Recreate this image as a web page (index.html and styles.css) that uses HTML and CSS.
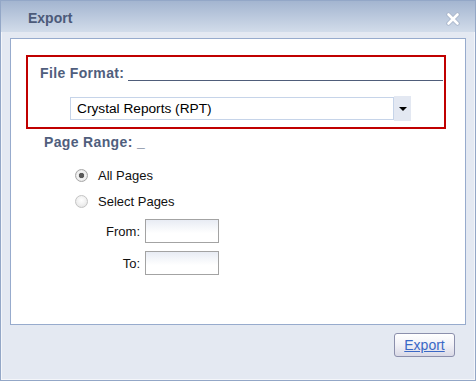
FILE: index.html
```html
<!DOCTYPE html>
<html>
<head>
<meta charset="utf-8">
<link rel="stylesheet" href="styles.css">
</head>
<body>
<div class="dialog">
  <div class="header">
    <span class="title">Export</span>
    <svg class="close" width="14" height="14" viewBox="0 0 14 14">
      <path d="M2.5 2.5 L11.5 11.5 M11.5 2.5 L2.5 11.5" stroke="#a9b6cb" stroke-width="4.4" stroke-linecap="round"/>
      <path d="M2.5 2.5 L11.5 11.5 M11.5 2.5 L2.5 11.5" stroke="#ffffff" stroke-width="2.6" stroke-linecap="round"/>
    </svg>
  </div>
  <div class="body">
    <div class="panel">
      <div class="format-box">
        <div class="legend">
          <span class="label">File Format:</span>
          <span class="rule"></span>
        </div>
        <div class="select-row">
          <div class="select-input">Crystal Reports (RPT)</div>
          <div class="select-btn"><span class="arrow"></span></div>
        </div>
      </div>
      <div class="range-label label">Page Range: _</div>
      <div class="radios">
        <div class="radio-row"><span class="radio checked"></span><span class="radio-text">All Pages</span></div>
        <div class="radio-row"><span class="radio"></span><span class="radio-text">Select Pages</span></div>
      </div>
      <div class="field-row first"><span class="field-label">From:</span><span class="field-input"></span></div>
      <div class="field-row"><span class="field-label">To:</span><span class="field-input"></span></div>
    </div>
    <div class="footer">
      <div class="btn"><span class="btn-text">Export</span></div>
    </div>
  </div>
</div>
</body>
</html>
```
FILE: styles.css
```css
html, body {
  margin: 0;
  padding: 0;
}
body {
  width: 476px;
  height: 381px;
  overflow: hidden;
  font-family: "Liberation Sans", Arial, sans-serif;
}
.dialog {
  width: 476px;
  height: 381px;
  box-sizing: border-box;
  border: 1px solid #93a7c7;
  box-shadow: inset 0 0 0 1px #f4f6fa;
  background: #e4e9f2;
  display: flex;
  flex-direction: column;
}
.header {
  height: 31px;
  flex: none;
  display: flex;
  align-items: center;
  justify-content: space-between;
  padding: 0 15px 0 27px;
  background: linear-gradient(#a3b5d0, #d2dcea);
  border-top: 0;
}
.title {
  font-weight: bold;
  font-size: 14px;
  color: #4c5a79;
  margin-top: 2px;
}
.close {
  display: block;
  margin-top: 5px;
}
.body {
  flex: 1;
  padding: 6px 9px 0 9px;
  display: flex;
  flex-direction: column;
}
.panel {
  height: 287px;
  box-sizing: border-box;
  border: 1px solid #97abcd;
  background: #ffffff;
}
.label {
  font-weight: bold;
  font-size: 14px;
  letter-spacing: 0.35px;
  color: #505e7d;
  line-height: 16px;
}
.format-box {
  margin: 16px 0 0 15px;
  width: 420px;
  height: 74px;
  box-sizing: border-box;
  border: 2px solid #c00000;
  padding-left: 12px;
}
.legend {
  display: flex;
  margin-top: 8px;
  height: 16px;
}
.rule {
  flex: 1;
  height: 0;
  margin: 15px 1px 0 4px;
  border-bottom: 1px solid #4f5d7a;
}
.select-row {
  display: flex;
  align-items: flex-start;
  margin: 15px 0 0 30px;
}
.select-input {
  width: 324px;
  height: 23px;
  box-sizing: border-box;
  margin-top: 1px;
  border: 1px solid #c6d4e9;
  padding-left: 6px;
  font-size: 13.7px;
  line-height: 21px;
  color: #000;
}
.select-btn {
  width: 17px;
  height: 25px;
  background: #e3e8f2;
  display: flex;
  align-items: center;
  justify-content: center;
}
.arrow {
  width: 0;
  height: 0;
  border-left: 4px solid transparent;
  border-right: 4px solid transparent;
  border-top: 4px solid #000;
  margin-top: 1px;
}
.range-label {
  margin: 5px 0 0 33px;
}
.radios {
  margin: 15px 0 0 64px;
  display: flex;
  flex-direction: column;
  gap: 6px;
}
.radio-row {
  display: flex;
  align-items: center;
  height: 20px;
}
.radio {
  width: 13px;
  height: 13px;
  box-sizing: border-box;
  border-radius: 50%;
  border: 1px solid #c4c4c4;
  background: radial-gradient(circle at 50% 40%, #ffffff 0%, #f1f1f1 50%, #dedede 100%);
  display: flex;
  align-items: center;
  justify-content: center;
}
.radio.checked {
  border-color: #a8a8a8;
  background: radial-gradient(circle at 50% 50%, #5a5a5a 0, #5a5a5a 2.4px, #e9e9e9 3px, #f4f4f4 4px, #cfcfcf 100%);
}
.radio-text {
  margin-left: 10px;
  font-size: 13px;
  color: #111;
}
.field-row {
  display: flex;
  align-items: center;
  margin: 8px 0 0 89px;
}
.field-row.first {
  margin-top: 8px;
}
.field-label {
  width: 40px;
  text-align: right;
  margin-right: 5px;
  font-size: 13px;
  color: #111;
}
.field-input {
  width: 74px;
  height: 24px;
  box-sizing: border-box;
  border: 1px solid #a3a3a3;
  background: linear-gradient(#e8ecf4, #ffffff 60%);
}
.footer {
  display: flex;
  justify-content: flex-end;
  padding: 8px 11px 0 0;
}
.btn {
  width: 61px;
  height: 24px;
  box-sizing: border-box;
  border: 1px solid #8b8fac;
  border-radius: 3px;
  background: linear-gradient(#ffffff, #f1f1f7 50%, #d9d9e6);
  display: flex;
  align-items: center;
  justify-content: center;
}
.btn-text {
  font-size: 14px;
  color: #3a68c6;
  text-decoration: underline;
}
```
